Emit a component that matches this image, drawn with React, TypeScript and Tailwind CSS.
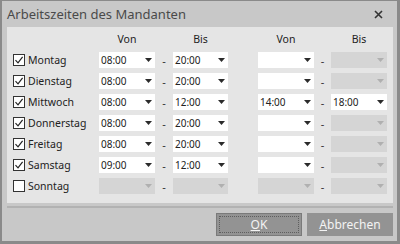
const rows = [
  { day: "Montag", checked: true, von1: "08:00", bis1: "20:00", von2: "", bis2: null as string | null, off: false },
  { day: "Dienstag", checked: true, von1: "08:00", bis1: "20:00", von2: "", bis2: null, off: false },
  { day: "Mittwoch", checked: true, von1: "08:00", bis1: "12:00", von2: "14:00", bis2: "18:00", off: false },
  { day: "Donnerstag", checked: true, von1: "08:00", bis1: "20:00", von2: "", bis2: null, off: false },
  { day: "Freitag", checked: true, von1: "08:00", bis1: "20:00", von2: "", bis2: null, off: false },
  { day: "Samstag", checked: true, von1: "09:00", bis1: "12:00", von2: "", bis2: null, off: false },
  { day: "Sonntag", checked: false, von1: "", bis1: "", von2: "", bis2: null, off: true },
];

function Combo({ value, disabled }: { value: string; disabled?: boolean }) {
  return (
    <div
      className={`h-[16px] flex items-center justify-between pl-[2px] pr-[3px] ${
        disabled ? "bg-[#d5d5d5]" : "bg-white"
      }`}
    >
      <span className="text-[10px] leading-none text-[#222]">{value}</span>
      <svg width="7" height="4" viewBox="0 0 7 4">
        <path d="M0 0h7L3.5 4z" fill={disabled ? "#b0b0b0" : "#2b2b2b"} />
      </svg>
    </div>
  );
}

function Dash() {
  return <div className="flex items-center justify-center text-[11px] leading-none text-[#333]">-</div>;
}

function Check({ checked }: { checked: boolean }) {
  return (
    <div className="w-[12px] h-[12px] bg-white border border-[#333] flex items-center justify-center">
      {checked && (
        <svg width="10" height="10" viewBox="0 0 10 10">
          <path d="M1.5 5.2 L4 7.8 L8.6 1.8" fill="none" stroke="#222" strokeWidth="1.2" />
        </svg>
      )}
    </div>
  );
}

export default function App() {
  return (
    <div
      className="w-[400px] h-[244px] bg-[#c8c8c8] border-l-2 border-t border-r-[3px] border-b-[3px] border-[#8a8a8a] flex flex-col"
      style={{ fontFamily: '"Noto Sans", "Open Sans", sans-serif' }}
    >
      <div className="h-[26px] flex items-center justify-between pl-[5px] pr-[14px]">
        <span className="text-[13px] text-[#4a4a4a] leading-none">Arbeitszeiten des Mandanten</span>
        <svg width="9" height="9" viewBox="0 0 9 9">
          <path d="M1 1L8 8M8 1L1 8" stroke="#333" strokeWidth="1.6" />
        </svg>
      </div>

      <div className="ml-[5px] w-[386px] h-[176px] bg-[#e5e5e5] pt-[4px] pl-[6px]">
        <div className="grid grid-cols-[86px_56px_18px_55px_30px_56px_17px_56px] gap-y-[5px]">
          <div className="h-[16px] mb-[-2px]" />
          <div className="text-[10.5px] text-[#222] text-center leading-[16px]">Von</div>
          <div />
          <div className="text-[10.5px] text-[#222] text-center leading-[16px]">Bis</div>
          <div />
          <div className="text-[10.5px] text-[#222] text-center leading-[16px]">Von</div>
          <div />
          <div className="text-[10.5px] text-[#222] text-center leading-[16px]">Bis</div>

          {rows.map((r) => (
            <div key={r.day} className="contents">
              <div className="h-[16px] flex items-center gap-[3px]">
                <Check checked={r.checked} />
                <span className="text-[10.5px] text-[#222] leading-none">{r.day}</span>
              </div>
              <Combo value={r.von1} disabled={r.off} />
              <Dash />
              <Combo value={r.bis1} disabled={r.off} />
              <div />
              <Combo value={r.von2} disabled={r.off} />
              <Dash />
              <Combo value={r.bis2 ?? ""} disabled={r.bis2 === null} />
            </div>
          ))}
        </div>
      </div>

      <div className="mt-[3px] ml-[5px] w-[386px] h-[2px] bg-[#b2b2b2]" />

      <div className="mt-[5px] flex justify-end gap-[5px] pr-[4px]">
        <button className="w-[86px] h-[23px] bg-[#939393] border border-[#7a7a7a] p-[2px]">
          <div className="w-full h-full border border-dotted border-[#5e5e5e] flex items-center justify-center text-[12px] text-[#f4f4f4] leading-none">
            <span><u>O</u>K</span>
          </div>
        </button>
        <button className="w-[86px] h-[23px] bg-[#939393] flex items-center justify-center text-[12px] text-[#f4f4f4] leading-none">
          <span><u>A</u>bbrechen</span>
        </button>
      </div>
    </div>
  );
}
